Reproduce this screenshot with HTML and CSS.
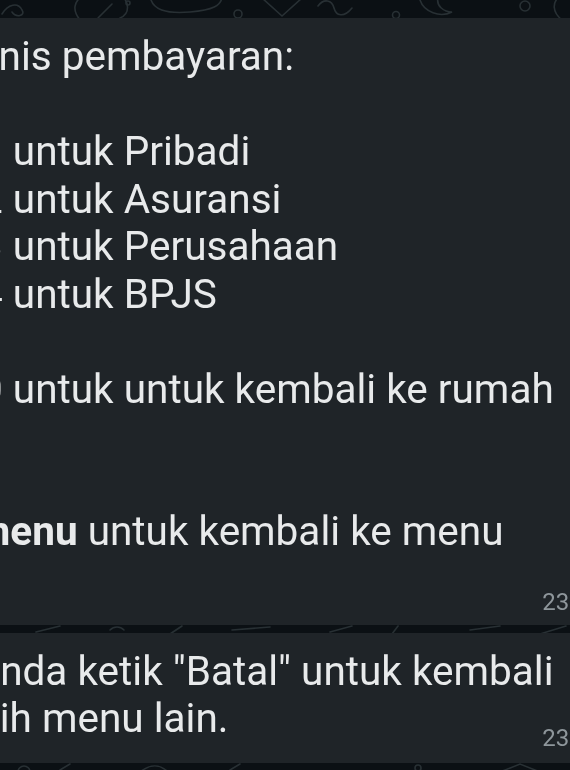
FILE: index.html
```html
<!DOCTYPE html>
<html lang="id">
<head>
    <meta charset="UTF-8">
    <meta name="viewport" content="width=device-width, initial-scale=1.0">
    <title>Chat - Pembayaran</title>
    <link rel="stylesheet" href="styles.css">
</head>
<body>
    <div class="wallpaper">
        <svg width="570" height="770" viewBox="0 0 570 770" fill="none" stroke="#283034" stroke-width="1.6" stroke-linecap="round">
            <!-- top strip -->
            <path d="M2 14 C 8 4, 18 2, 22 10 C 26 16, 16 18, 12 12"/>
            <path d="M80 20 C 72 10, 74 2, 82 -4"/>
            <path d="M98 18 L 112 4"/>
            <circle cx="128" cy="3" r="2"/>
            <path d="M120 -6 C 130 2, 130 14, 120 18"/>
            <path d="M150 -4 C 152 10, 166 14, 190 12 C 212 10, 222 6, 222 -4"/>
            <circle cx="238" cy="14" r="4"/>
            <path d="M262 -2 L 282 16 L 302 -2"/>
            <path d="M318 6 C 324 -2, 332 0, 334 8 C 336 16, 344 18, 352 8"/>
            <circle cx="396" cy="15" r="3.5"/>
            <path d="M420 0 C 424 12, 440 18, 452 12 C 444 12, 436 6, 438 -2"/>
            <circle cx="525" cy="6" r="5"/>
            <path d="M562 20 C 552 12, 552 2, 560 -4"/>
            <!-- gap between bubbles -->
            <path d="M36 632 L 60 626"/>
            <path d="M110 630 C 114 626, 120 626, 124 630"/>
            <path d="M170 634 L 182 626"/>
            <path d="M232 630 L 270 627"/>
            <path d="M330 632 L 352 626"/>
            <path d="M392 634 L 398 626"/>
            <path d="M470 630 L 500 626"/>
            <path d="M540 634 L 566 626"/>
            <!-- bottom strip -->
            <circle cx="24" cy="772" r="6"/>
            <path d="M60 770 L 70 764"/>
            <path d="M140 772 C 150 764, 160 764, 168 772"/>
            <path d="M230 770 L 240 764"/>
            <circle cx="418" cy="768" r="3"/>
            <path d="M500 772 L 520 764 L 540 772"/>
        </svg>
    </div>

    <main class="chat">
        <div class="bubble">
            <div class="text">Pilih jenis pembayaran:

Ketik 1 untuk Pribadi
Ketik 2 untuk Asuransi
Ketik 3 untuk Perusahaan
Ketik 4 untuk BPJS

Ketik 0 untuk untuk kembali ke rumah


Tulis <b>menu</b> untuk kembali ke menu</div>
            <div class="time">23:59</div>
        </div>

        <div class="bubble inline-time">
            <div class="text">Atau Anda ketik "Batal" untuk kembali
dan pilih menu lain.</div>
            <span class="time">23:59</span>
        </div>
    </main>
</body>
</html>
```

FILE: styles.css
```css
html, body {
    margin: 0;
    padding: 0;
    overflow: hidden;
}
body {
    background-color: #0b1014;
    font-family: Roboto, "Noto Sans", Arial, sans-serif;
    color: #e8eaeb;
}
.wallpaper {
    position: fixed;
    top: 0;
    left: 0;
    z-index: -1;
}
.wallpaper svg {
    display: block;
}
.chat {
    display: flex;
    flex-direction: column;
    gap: 8px;
    padding-top: 18px;
    margin-left: -132px;
    width: 746px;
}
.bubble {
    position: relative;
    background-color: #1f2428;
    border-radius: 8px;
    padding: 15px 12px 7px 12px;
}
.bubble .text {
    font-size: 40.5px;
    line-height: 47.5px;
    white-space: pre;
}
.bubble .text b {
    font-weight: 700;
}
.time {
    margin-top: 30px;
    font-size: 24px;
    line-height: 32px;
    color: #8e969b;
    text-align: right;
}
.inline-time {
    padding-bottom: 20px;
}
.inline-time .time {
    position: absolute;
    right: 12px;
    bottom: 9px;
    margin-top: 0;
}
```
